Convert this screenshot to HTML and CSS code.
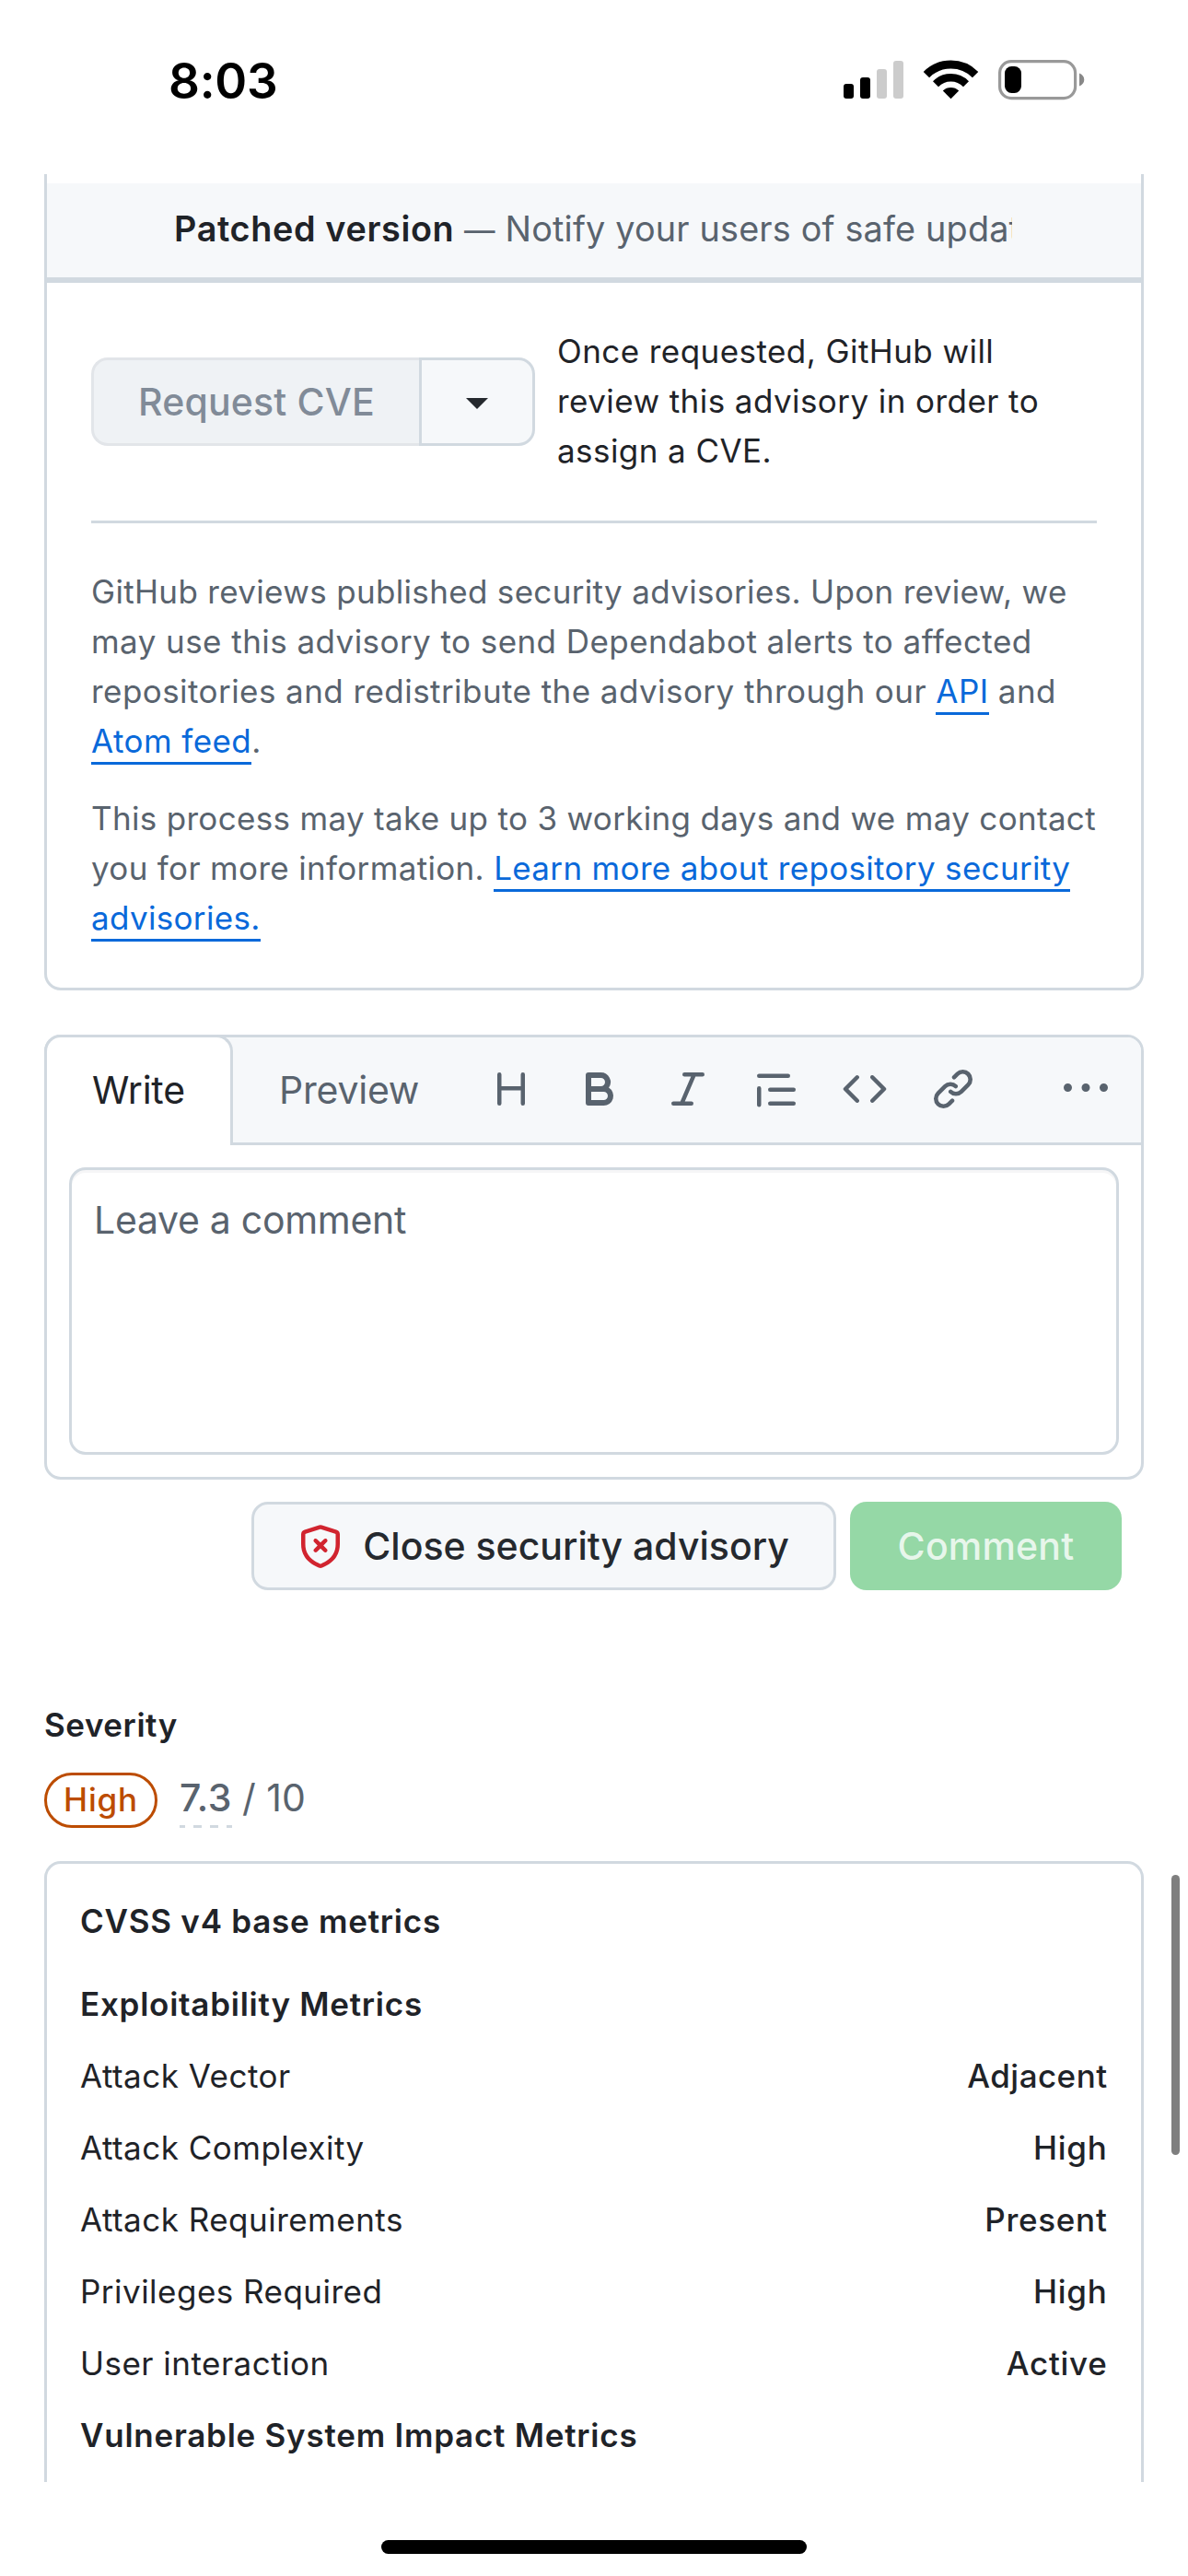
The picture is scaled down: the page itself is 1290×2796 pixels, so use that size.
FILE: index.html
```html
<!DOCTYPE html>
<html lang="en">
<head>
<meta charset="utf-8">
<title>Security advisory</title>
<link rel="stylesheet" href="styles.css">
</head>
<body>
<header class="status">
  <span class="clock">8:03</span>
  <svg class="status-icons" viewBox="916 65 262 44" aria-hidden="true">
    <rect x="916" y="91" width="11" height="16" rx="3"/>
    <rect x="934" y="84" width="11" height="23" rx="3"/>
    <rect x="952" y="75" width="11" height="32" rx="3" fill="#ccc"/>
    <rect x="970" y="66" width="11" height="41" rx="3" fill="#ccc"/>
    <g fill="none" stroke="#000">
      <path stroke-width="9" d="M1005.9 81.1a37.6 37.6 0 0 1 53.2 0"/>
      <path stroke-width="8.5" d="M1016 91.2a23.3 23.3 0 0 1 33 0"/>
    </g>
    <path d="M1032.5 107.2l-8.7-8.8a13 13 0 0 1 17.4 0z"/>
    <rect x="1085.6" y="66.6" width="82" height="40" rx="12.5" fill="none" stroke="#999" stroke-width="3.2"/>
    <rect x="1091" y="72" width="18" height="29" rx="7.5"/>
    <path d="M1172 79.5c7 2.5 7 11.500 0 14z" fill="#888"/>
  </svg>
</header>

<main class="viewport">
  <section class="box cve">
    <div class="step">
      <div class="step-text"><b>Patched version</b> <span class="dash">—</span> <span>Notify your users of safe updates</span></div>
    </div>
    <div class="cve-body">
      <div class="request">
        <div class="split">
          <button class="btn split-main" disabled>Request CVE</button>
          <button class="btn split-caret" aria-label="More options"><i class="caret"></i></button>
        </div>
        <p class="request-note">Once requested, GitHub will<br>review this advisory in order to<br>assign a CVE.</p>
      </div>
      <p class="note"><span class="l1">GitHub reviews published security advisories. Upon review, we</span><br>may use this advisory to send Dependabot alerts to affected<br>repositories and redistribute the advisory through our <a>API</a> and<br><a>Atom feed</a>.</p>
      <p class="note"><span class="l2">This process may take up to 3 working days and we may contact</span><br><span class="l1">you for more information. <a>Learn more about repository security<br>advisories.</a></span></p>
    </div>
  </section>

  <section class="box editor">
    <div class="tabs">
      <span class="tab tab-active">Write</span>
      <span class="tab tab-preview">Preview</span>
      <div class="tools">
        <svg viewBox="0 0 16 16"><path d="M3.75 2a.75.75 0 0 1 .75.75V7h7V2.75a.75.75 0 0 1 1.5 0v10.5a.75.75 0 0 1-1.5 0V8.500h-7v4.750a.75.75 0 0 1-1.5 0V2.750A.75.75 0 0 1 3.750 2Z"/></svg>
        <svg viewBox="0 0 16 16"><path d="M4 2h4.5a3.501 3.501 0 0 1 2.852 5.53A3.499 3.499 0 0 1 9.5 14H4a1 1 0 0 1-1-1V3a1 1 0 0 1 1-1Zm1 7v3h4.5a1.5 1.5 0 0 0 0-3Zm3.5-2a1.5 1.5 0 0 0 0-3H5v3Z"/></svg>
        <svg viewBox="0 0 16 16"><path d="M6 2.75A.75.75 0 0 1 6.75 2h6.5a.75.75 0 0 1 0 1.5h-2.505l-3.858 9H9.25a.75.75 0 0 1 0 1.5h-6.5a.75.75 0 0 1 0-1.5h2.505l3.858-9H6.75A.75.75 0 0 1 6 2.75Z"/></svg>
        <svg viewBox="0 0 16 16"><path d="M1.75 2.5h10.5a.75.75 0 0 1 0 1.5H1.75a.75.75 0 0 1 0-1.5Zm4 5h8.5a.75.75 0 0 1 0 1.5h-8.5a.75.75 0 0 1 0-1.5Zm0 5h8.5a.75.75 0 0 1 0 1.5h-8.5a.75.75 0 0 1 0-1.5ZM2.5 7.75v6a.75.75 0 0 1-1.5 0v-6a.75.75 0 0 1 1.5 0Z"/></svg>
        <svg viewBox="0 0 16 16"><path d="m11.28 3.22 4.25 4.25a.75.75 0 0 1 0 1.06l-4.25 4.25a.749.749 0 0 1-1.275-.326.749.749 0 0 1 .215-.734L13.94 8l-3.72-3.72a.749.749 0 0 1 .326-1.275.749.749 0 0 1 .734.215Zm-6.56 0a.751.751 0 0 1 1.042.018.751.751 0 0 1 .018 1.042L2.06 8l3.72 3.72a.749.749 0 0 1-.326 1.275.749.749 0 0 1-.734-.215L.47 8.53a.75.75 0 0 1 0-1.06Z"/></svg>
        <svg viewBox="0 0 16 16"><path d="m7.775 3.275 1.25-1.25a3.5 3.5 0 1 1 4.95 4.95l-2.5 2.5a3.5 3.5 0 0 1-4.95 0 .751.751 0 0 1 .018-1.042.751.751 0 0 1 1.042-.018 1.998 1.998 0 0 0 2.83 0l2.5-2.5a2.002 2.002 0 0 0-2.83-2.83l-1.25 1.25a.751.751 0 0 1-1.042-.018.751.751 0 0 1-.018-1.042Zm-4.69 9.64a1.998 1.998 0 0 0 2.83 0l1.25-1.25a.751.751 0 0 1 1.042.018.751.751 0 0 1 .018 1.042l-1.25 1.25a3.5 3.5 0 1 1-4.95-4.95l2.5-2.5a3.5 3.5 0 0 1 4.95 0 .751.751 0 0 1-.018 1.042.751.751 0 0 1-1.042.018 1.998 1.998 0 0 0-2.83 0l-2.5 2.5a1.998 1.998 0 0 0 0 2.83Z"/></svg>
        <svg class="more" viewBox="0 0 16 16"><path d="M8 9a1.5 1.5 0 1 0 0-3 1.5 1.5 0 0 0 0 3ZM1.5 9a1.5 1.5 0 1 0 0-3 1.5 1.5 0 0 0 0 3Zm13 0a1.5 1.5 0 1 0 0-3 1.5 1.5 0 0 0 0 3Z"/></svg>
      </div>
    </div>
    <div class="field">Leave a comment</div>
  </section>

  <div class="actions">
    <button class="btn close">
      <svg viewBox="0 0 16 16"><path d="m8.533.133 5.25 1.68A1.75 1.75 0 0 1 15 3.48V7c0 1.566-.32 3.182-1.303 4.682-.983 1.498-2.585 2.813-5.032 3.855a1.697 1.697 0 0 1-1.33 0c-2.447-1.042-4.049-2.357-5.032-3.855C1.32 10.182 1 8.566 1 7V3.48a1.75 1.75 0 0 1 1.217-1.667l5.25-1.68a1.748 1.748 0 0 1 1.066 0Zm-.61 1.429.001.001-5.25 1.68a.251.251 0 0 0-.174.237V7c0 1.36.275 2.666 1.057 3.859.784 1.194 2.121 2.342 4.366 3.298a.196.196 0 0 0 .154 0c2.245-.957 3.582-2.103 4.366-3.297C13.225 9.666 13.5 8.358 13.5 7V3.48a.25.25 0 0 0-.174-.238l-5.25-1.68a.25.25 0 0 0-.153 0ZM6.78 5.22 8 6.44l1.22-1.22a.749.749 0 0 1 1.275.326.749.749 0 0 1-.215.734L9.06 7.5l1.22 1.22a.749.749 0 0 1-.326 1.275.749.749 0 0 1-.734-.215L8 8.56 6.78 9.78a.751.751 0 0 1-1.042-.018.751.751 0 0 1-.018-1.042L6.94 7.5 5.72 6.28a.749.749 0 0 1 .326-1.275.749.749 0 0 1 .734.215Z"/></svg>
      Close security advisory
    </button>
    <button class="btn comment" disabled>Comment</button>
  </div>

  <section class="severity">
    <h3 class="severity-title">Severity</h3>
    <div class="rating">
      <span class="pill">High</span>
      <span class="score">7.3</span>
      <span class="out-of">/ 10</span>
    </div>
    <div class="box metrics">
      <h4 class="metrics-title">CVSS v4 base metrics</h4>
      <h4>Exploitability Metrics</h4>
      <div class="metric"><span>Attack Vector</span><b class="tight">Adjacent</b></div>
      <div class="metric"><span>Attack Complexity</span><b>High</b></div>
      <div class="metric"><span>Attack Requirements</span><b>Present</b></div>
      <div class="metric"><span>Privileges Required</span><b>High</b></div>
      <div class="metric"><span>User interaction</span><b>Active</b></div>
      <h4>Vulnerable System Impact Metrics</h4>
    </div>
  </section>
</main>

<footer class="home"><div class="home-bar"></div></footer>
<div class="scrollbar"></div>
</body>
</html>
```
FILE: styles.css
```css
* { box-sizing: border-box; }

body {
  position: relative;
  display: flex;
  flex-direction: column;
  width: 1290px;
  height: 2796px;
  margin: 0;
  overflow: hidden;
  background: #fff;
  color: #1f2328;
  font: 400 35px/54px Inter, "Liberation Sans", sans-serif;
  font-optical-sizing: none;
  letter-spacing: 0.48px;
}

p, h3, h4 { margin: 0; font-size: inherit; }
h3, h4 { font-weight: 600; letter-spacing: 0.75px; }

/* Status bar */
.status {
  display: flex;
  flex: none;
  align-items: center;
  justify-content: space-between;
  height: 173px;
  margin-bottom: 16px;
  padding: 0 112px 0 183px;
  color: #000;
}
.clock {
  padding-top: 3px;
  font-size: 53px;
  font-weight: 600;
  letter-spacing: -0.27px;
}
.status-icons { width: 262px; height: 44px; }

/* Scrolled page */
.viewport {
  flex: none;
  height: 2505px;
  overflow: hidden;
}
.box {
  margin: 0 48px;
  border: 3px solid #d1d9e0;
  border-radius: 18px;
}

.cve {
  padding-top: 10px;
  border-top: 0;
  border-radius: 0 0 18px 18px;
}
.step {
  height: 108px;
  padding: 0 140px 0 138px;
  border-bottom: 6px solid #d1d9e0;
  background: #f6f8fa;
}
.step-text {
  overflow: hidden;
  color: #59636e;
  font-size: 37.8px;
  line-height: 98px;
  letter-spacing: 0.17px;
  white-space: nowrap;
}
.step-text b { color: #1f2328; font-weight: 600; letter-spacing: 0.62px; }
.step-text .dash { font-size: 33.5px; }

.cve-body { padding: 47px 48px 49px; }
.request {
  display: flex;
  align-items: center;
  gap: 24px;
  padding-bottom: 49px;
  border-bottom: 3px solid #d1d9e0;
}
.request-note { letter-spacing: 0.43px; }
.note { margin-top: 47px; color: #59636e; letter-spacing: 0.44px; white-space: nowrap; }
.note + .note { margin-top: 30px; }
.note .l1 { letter-spacing: 0.33px; }
.note .l2 { letter-spacing: 0.32px; }
.note a { padding-bottom: 1.5px; border-bottom: 3px solid #0969da; color: #0969da; }

.btn {
  display: flex;
  align-items: center;
  justify-content: center;
  height: 96px;
  padding: 0;
  border: 3px solid #d1d9e0;
  border-radius: 18px;
  background: #f6f8fa;
  color: #25292e;
  font: inherit;
  font-size: 41px;
  font-weight: 500;
  letter-spacing: 0;
}
.split { display: flex; flex: none; margin-top: 2px; }
.split-main {
  width: 356px;
  border-color: #e2e5e9;
  border-right: 0;
  border-radius: 18px 0 0 18px;
  background: #eff2f5;
  color: #818b98;
  letter-spacing: 0.17px;
}
.split-caret { width: 126px; border-radius: 0 18px 18px 0; }
.caret {
  border: 12px solid transparent;
  border-top-color: #25292e;
  border-bottom: 0;
  margin-top: 3px;
}

/* Comment editor */
.editor { margin-top: 48px; }
.tabs {
  display: flex;
  height: 117px;
  border-bottom: 3px solid #d1d9e0;
  border-radius: 15px 15px 0 0;
  background: #f6f8fa;
}
.tab {
  padding-left: 49px;
  color: #59636e;
  font-size: 41px;
  line-height: 114px;
  letter-spacing: -0.22px;
}
.tab-preview { padding-left: 50px; }
.tab-active {
  width: 205px;
  margin: -3px 0 -3px -3px;
  border: 3px solid #d1d9e0;
  border-bottom: 0;
  border-radius: 18px 18px 0 0;
  background: #fff;
  color: #1f2328;
}
.tools {
  display: flex;
  align-items: center;
  gap: 48px;
  margin: -2px 36px 0 auto;
}
.tools svg { width: 48px; height: 48px; fill: #59636e; }
.tools .more { margin-left: 48px; }
.field {
  height: 312px;
  margin: 24px;
  padding: 24px;
  border: 3px solid #d1d9e0;
  border-radius: 18px;
  box-shadow: inset 0 3px 0 rgba(31, 35, 40, 0.04);
  color: #59636e;
  font-size: 41px;
  line-height: 60px;
  letter-spacing: -0.29px;
}

.actions {
  display: flex;
  justify-content: flex-end;
  gap: 15px;
  margin: 24px 72px 0;
}
.close { width: 635px; gap: 22px; }
.close svg { width: 48px; height: 48px; margin-top: 2px; fill: #d1242f; }
.comment {
  width: 295px;
  border: 0;
  background: #95d8a6;
  color: rgba(255, 255, 255, 0.8);
  letter-spacing: 0.2px;
}

/* Severity */
.severity { margin-top: 119px; }
.severity-title { margin-left: 48px; letter-spacing: 0.55px; }
.rating {
  display: flex;
  height: 60px;
  margin: 25px 48px 36px;
  color: #59636e;
  font-size: 41px;
  letter-spacing: 0;
}
.pill {
  width: 123px;
  border: 3px solid #bc4c00;
  border-radius: 30px;
  color: #bc4c00;
  font-size: 35px;
  font-weight: 500;
  line-height: 52px;
  letter-spacing: 0.81px;
  text-align: center;
}
.score {
  width: 57px;
  margin: 0 11px 0 24px;
  background: repeating-linear-gradient(90deg, #d1d9e0 0 9px, transparent 9px 18px) -3px 100% / 72px 3px no-repeat;
  font-weight: 500;
  letter-spacing: 0.5px;
}
.metrics {
  display: flex;
  flex-direction: column;
  gap: 24px;
  height: 800px;
  padding: 35px 36px;
}
.metrics-title { margin-bottom: 12px; }
.metric { display: flex; justify-content: space-between; }
.metric b { margin-right: 0.5px; font-weight: 500; letter-spacing: 0.7px; }
.metric .tight { letter-spacing: 0.45px; }

.home { display: flex; justify-content: center; padding-top: 63px; }
.home-bar { width: 462px; height: 15px; border-radius: 8px; background: #000; }

.scrollbar {
  position: absolute;
  top: 2035px;
  right: 9px;
  width: 9px;
  height: 304px;
  border-radius: 5px;
  background: #7f7f7f;
}
```
